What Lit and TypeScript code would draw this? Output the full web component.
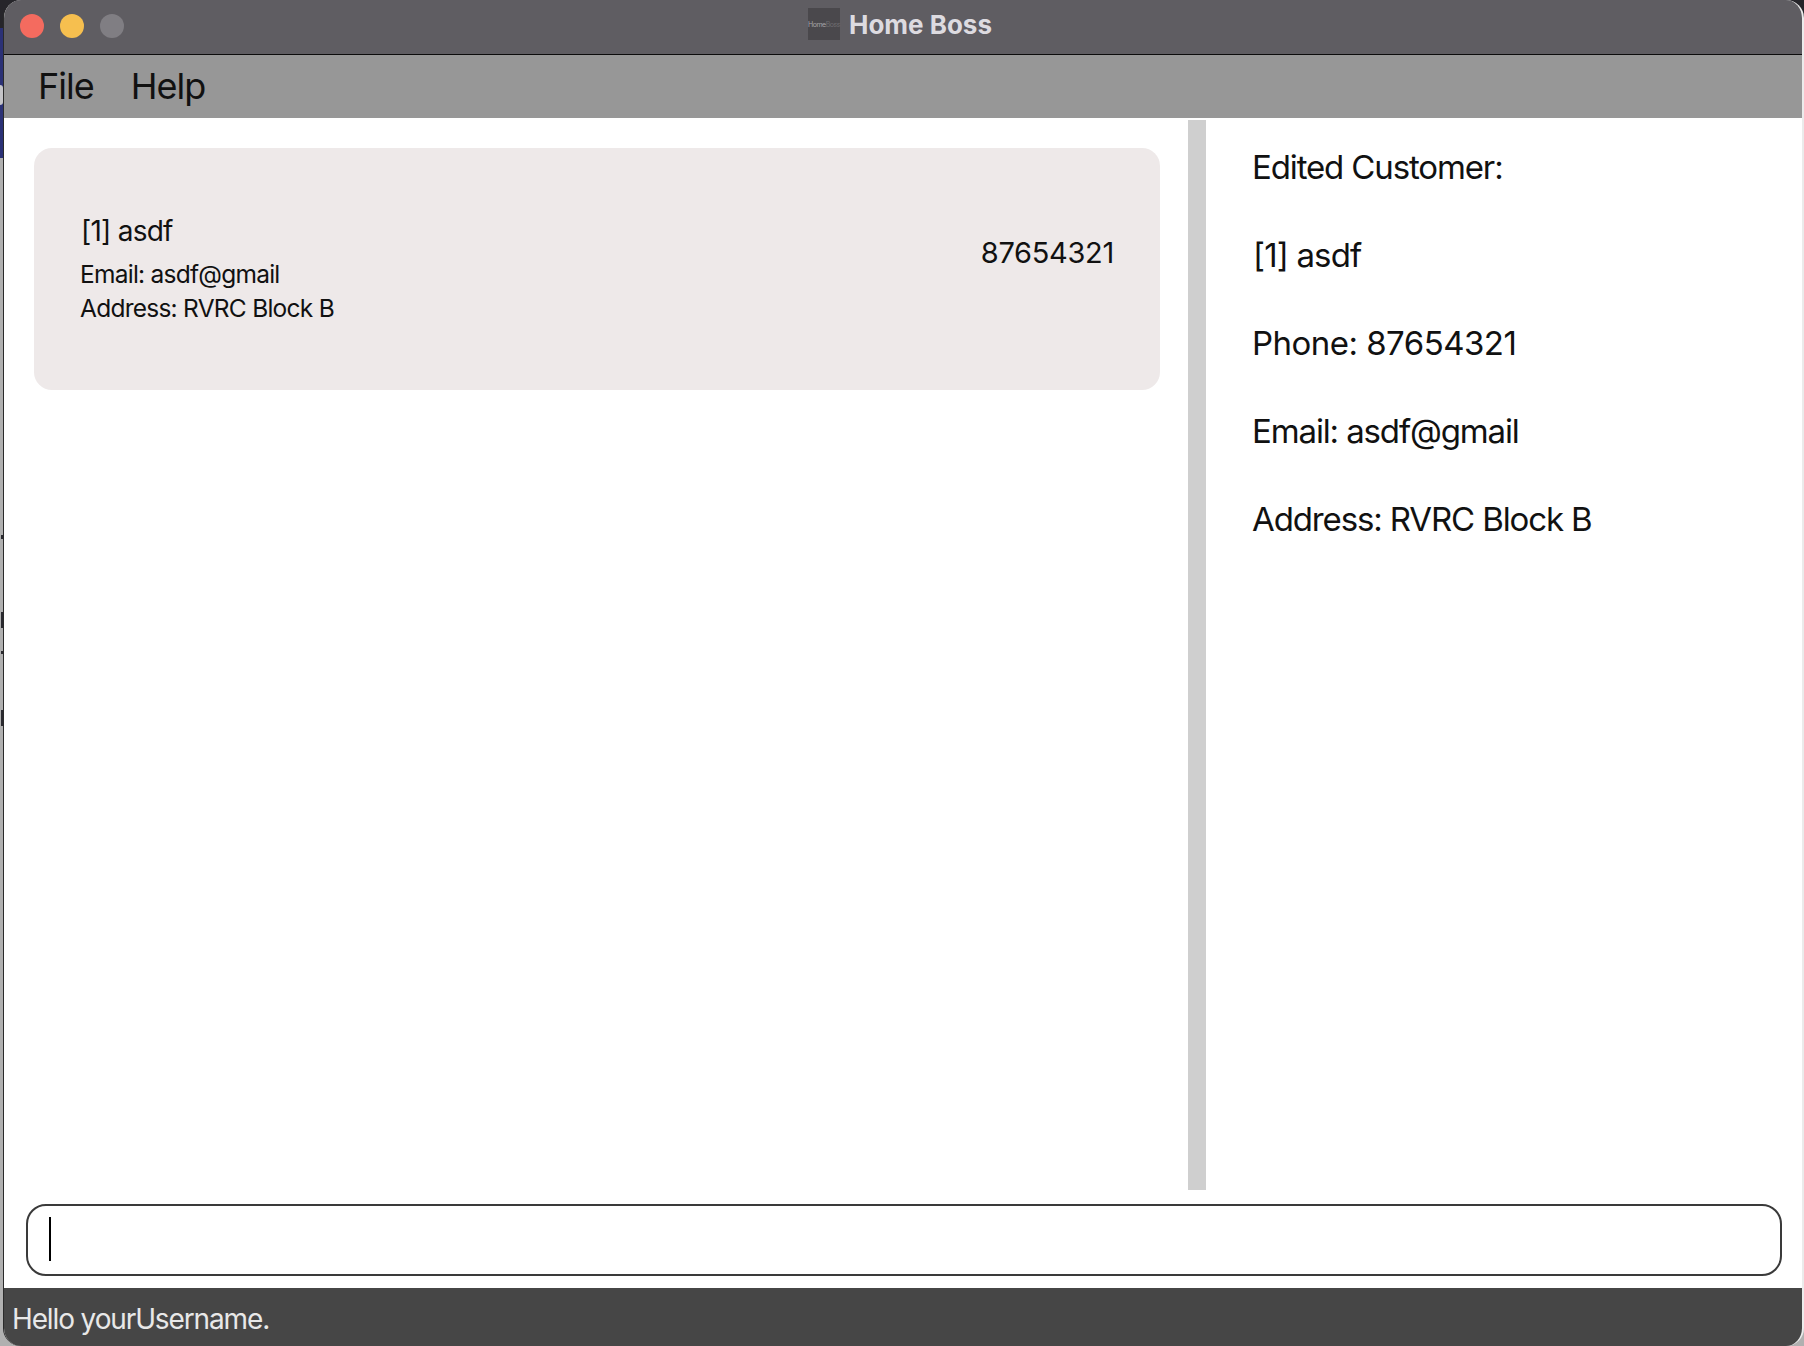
import { LitElement, html, css } from "lit";
import { customElement } from "lit/decorators.js";

@customElement("app-root")
export class AppRoot extends LitElement {
  static styles = css`
    :host {
      display: block;
      width: 1804px;
      height: 1346px;
      overflow: hidden;
      position: relative;
      background: #b0b0b0;
      font-family: Inter, "Liberation Sans", sans-serif;
      color: #111;
    }
    .strip {
      position: absolute;
      left: 0;
      top: 28px;
      width: 4px;
      height: 130px;
      background: #2b3176;
    }
    .glint {
      position: absolute;
      left: 0;
      top: 85px;
      width: 3px;
      height: 20px;
      border-radius: 0 10px 10px 0;
      background: #c4c4c8;
    }
    .mark {
      position: absolute;
      left: 1px;
      width: 2px;
      background: #2a2a30;
    }
    .m1 { top: 535px; height: 4px; }
    .m2 { top: 612px; height: 16px; }
    .m3 { top: 651px; height: 3px; }
    .m4 { top: 710px; height: 16px; }
    .corner {
      position: absolute;
      top: 0;
      left: 0;
      right: 0;
      height: 28px;
      background: #26252a;
    }
    .window {
      position: absolute;
      inset: 0 0 0 3px;
      display: flex;
      flex-direction: column;
      background: #fff;
      border-radius: 18px;
      overflow: hidden;
      border-left: 1px solid #2a2a2a;
      border-right: 2px solid rgba(190, 190, 190, 0.3);
    }
    .title {
      height: 54px;
      flex: none;
      background: #5f5d62;
      border-bottom: 1px solid #0c0c0c;
      display: flex;
      align-items: center;
      justify-content: center;
      position: relative;
    }
    .lights {
      position: absolute;
      left: 16px;
      top: 14px;
      display: flex;
      gap: 16px;
    }
    .light {
      width: 24px;
      height: 24px;
      border-radius: 50%;
    }
    .red { background: #f46b5f; }
    .yellow { background: #f6bf4f; }
    .grey { background: #807e83; }
    .brand {
      display: flex;
      align-items: center;
      gap: 9px;
      margin-left: -6px;
      margin-bottom: 6px;
    }
    .logo {
      width: 32px;
      height: 32px;
      background: #4a484c;
      font-size: 7px;
      letter-spacing: -0.5px;
      display: flex;
      align-items: center;
      justify-content: center;
      white-space: nowrap;
    }
    .logo-a { color: #a5a3a7; }
    .logo-b { color: #6f6d71; }
    .app-name {
      font-size: 26px;
      font-weight: 700;
      color: #dddbe0;
    }
    .menu {
      height: 63px;
      flex: none;
      background: #979797;
      display: flex;
      align-items: center;
      gap: 37px;
      padding: 0 0 2px 34px;
      box-sizing: border-box;
      font-size: 36px;
      letter-spacing: -1px;
    }
    .main {
      flex: 1;
      display: flex;
      min-height: 0;
      padding-top: 2px;
    }
    .list {
      width: 1184px;
      flex: none;
      padding: 28px 0 0 30px;
      box-sizing: border-box;
    }
    .card {
      width: 1126px;
      height: 242px;
      box-sizing: border-box;
      background: #eee9e9;
      border-radius: 18px;
      padding: 64px 46px 0 47px;
      display: flex;
      justify-content: space-between;
      align-items: flex-start;
    }
    .name {
      font-size: 28px;
      letter-spacing: -0.75px;
      line-height: 38px;
      margin-bottom: 7px;
    }
    .info {
      font-size: 24.5px;
      letter-spacing: -0.75px;
      line-height: 34px;
      margin-left: -1px;
    }
    .phone {
      font-size: 29px;
      letter-spacing: -0.3px;
      margin-top: 22px;
      line-height: 38px;
    }
    .splitter {
      width: 18px;
      flex: none;
      background: #cfcfcf;
      height: 1070px;
    }
    .detail {
      flex: 1;
      padding: 27px 0 0 46px;
      font-size: 33px;
      letter-spacing: -1.13px;
      line-height: 40px;
      display: flex;
      flex-direction: column;
      gap: 48px;
      align-items: flex-start;
    }
    .detail .index { letter-spacing: -0.85px; margin-left: 1px; }
    .detail .number { letter-spacing: -0.53px; }
    .command {
      height: 98px;
      flex: none;
      box-sizing: border-box;
      padding: 14px 20px 12px 22px;
    }
    .box {
      height: 72px;
      box-sizing: border-box;
      border: 2px solid #3a3a3a;
      border-radius: 20px;
      padding: 11px 21px;
    }
    .caret {
      width: 2px;
      height: 44px;
      background: #000;
    }
    .status {
      height: 58px;
      flex: none;
      box-sizing: border-box;
      background: #464646;
      color: #e8e8e8;
      font-size: 28px;
      letter-spacing: -1.13px;
      display: flex;
      align-items: center;
      padding: 4px 0 0 8px;
    }
  `;

  render() {
    return html`
      <div class="corner"></div>
      <div class="strip"></div>
      <div class="glint"></div>
      <div class="mark m1"></div>
      <div class="mark m2"></div>
      <div class="mark m3"></div>
      <div class="mark m4"></div>
      <div class="window">
        <div class="title">
          <div class="lights">
            <div class="light red"></div>
            <div class="light yellow"></div>
            <div class="light grey"></div>
          </div>
          <div class="brand">
            <div class="logo"><span class="logo-a">Home</span><span class="logo-b">Boss</span></div>
            <div class="app-name">Home Boss</div>
          </div>
        </div>
        <div class="menu"><span>File</span><span>Help</span></div>
        <div class="main">
          <div class="list">
            <div class="card">
              <div>
                <div class="name">[1] asdf</div>
                <div class="info">Email: asdf@gmail</div>
                <div class="info">Address: RVRC Block B</div>
              </div>
              <div class="phone">87654321</div>
            </div>
          </div>
          <div class="splitter"></div>
          <div class="detail">
            <div>Edited Customer:</div>
            <div class="index">[1] asdf</div>
            <div class="number">Phone: 87654321</div>
            <div>Email: asdf@gmail</div>
            <div>Address: RVRC Block B</div>
          </div>
        </div>
        <div class="command"><div class="box"><div class="caret"></div></div></div>
        <div class="status">Hello yourUsername.</div>
      </div>
    `;
  }
}
